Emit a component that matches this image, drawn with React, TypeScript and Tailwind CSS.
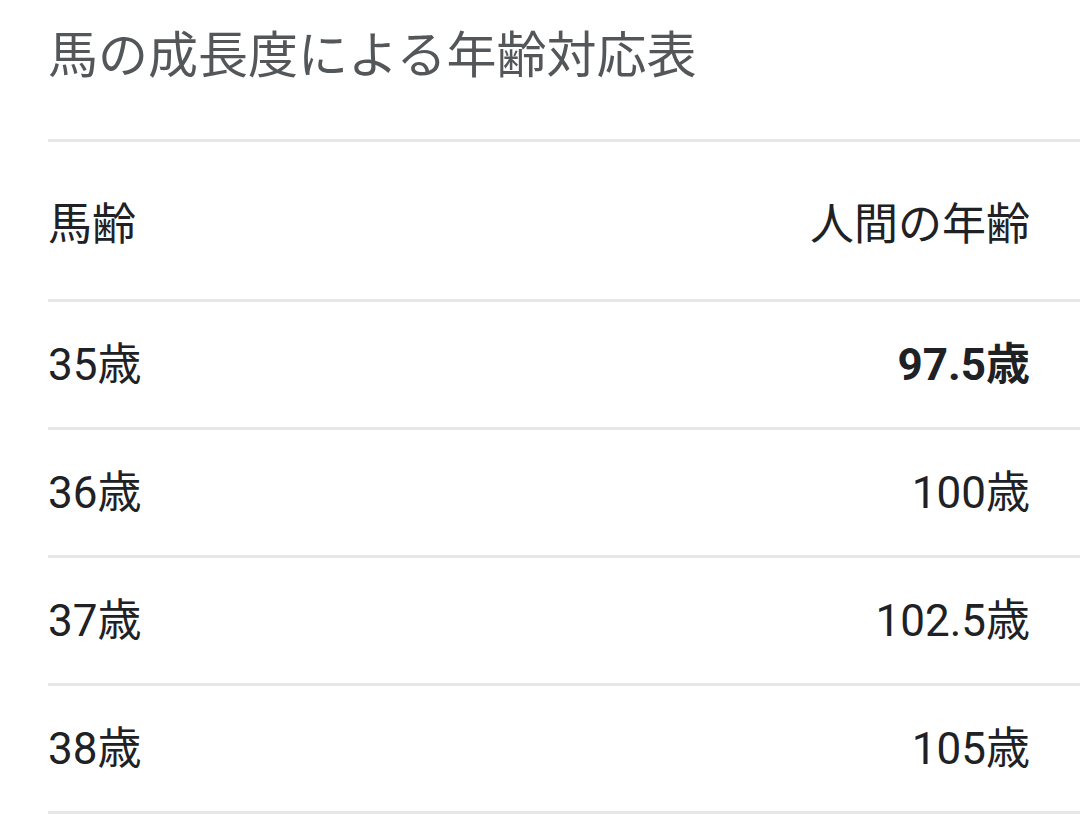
const rows = [
  { horse: "35歳", human: "97.5歳", bold: true },
  { horse: "36歳", human: "100歳" },
  { horse: "37歳", human: "102.5歳" },
  { horse: "38歳", human: "105歳" },
];

export default function App() {
  return (
    <div
      className="w-[1080px] h-[814px] bg-white overflow-hidden pl-12"
      style={{ fontFamily: 'Roboto, "Noto Sans CJK JP", sans-serif' }}
    >
      <h1 className="pt-[31px] mb-[58px] text-[50px] leading-[50px] text-[#54575a] font-normal tracking-[0px]">
        馬の成長度による年齢対応表
      </h1>
      <div className="text-[#202124] text-[44px] leading-[44px]">
        <div className="flex justify-between items-center h-[160px] pt-[8px] pr-[50px] border-t-[3px] border-[#e6e7e8]">
          <span>馬齢</span>
          <span>人間の年齢</span>
        </div>
        {rows.map((r) => (
          <div
            key={r.horse}
            className="flex justify-between items-center h-[128px] pr-[50px] border-t-[3px] border-[#e6e7e8]"
          >
            <span>{r.horse}</span>
            <span className={r.bold ? "font-bold" : ""}>{r.human}</span>
          </div>
        ))}
        <div className="border-t-[3px] border-[#e6e7e8]" />
      </div>
    </div>
  );
}
